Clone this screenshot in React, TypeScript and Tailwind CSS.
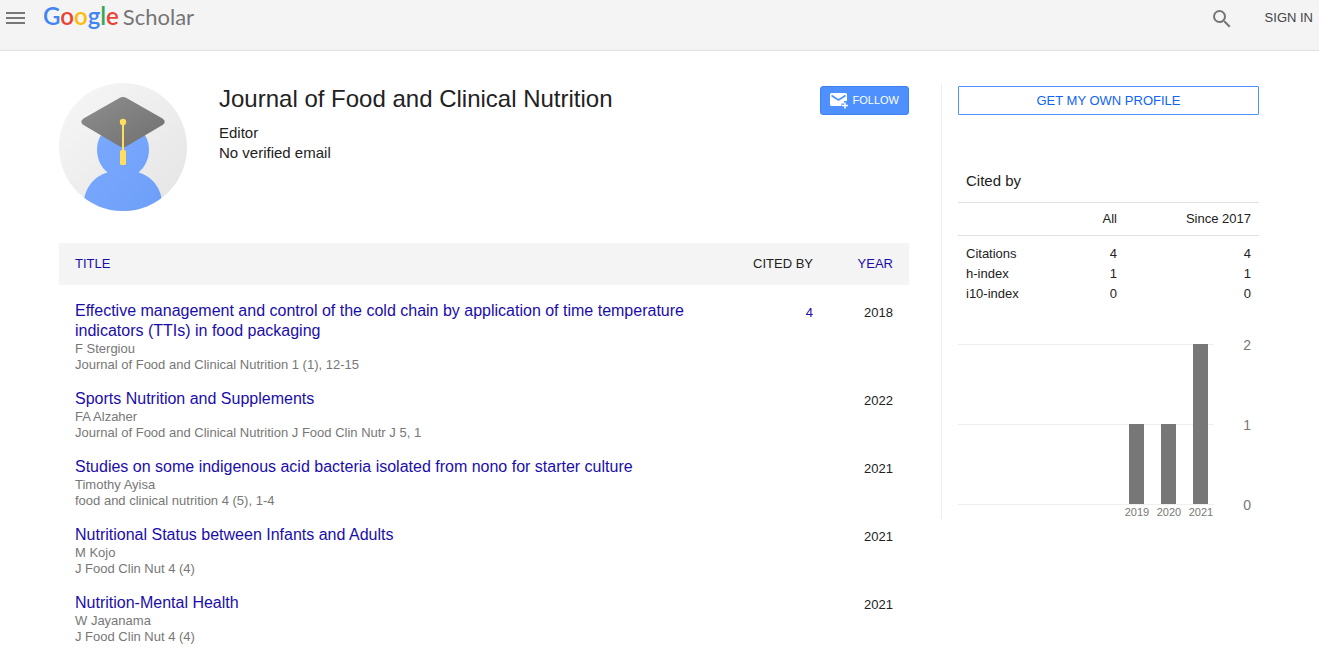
import React from "react";

type Article = {
  title: string;
  authors: string;
  venue: string;
  cited?: number;
  year: number;
};

const articles: Article[] = [
  {
    title:
      "Effective management and control of the cold chain by application of time temperature indicators (TTIs) in food packaging",
    authors: "F Stergiou",
    venue: "Journal of Food and Clinical Nutrition 1 (1), 12-15",
    cited: 4,
    year: 2018,
  },
  {
    title: "Sports Nutrition and Supplements",
    authors: "FA Alzaher",
    venue: "Journal of Food and Clinical Nutrition J Food Clin Nutr J 5, 1",
    year: 2022,
  },
  {
    title: "Studies on some indigenous acid bacteria isolated from nono for starter culture",
    authors: "Timothy Ayisa",
    venue: "food and clinical nutrition 4 (5), 1-4",
    year: 2021,
  },
  {
    title: "Nutritional Status between Infants and Adults",
    authors: "M Kojo",
    venue: "J Food Clin Nut 4 (4)",
    year: 2021,
  },
  {
    title: "Nutrition-Mental Health",
    authors: "W Jayanama",
    venue: "J Food Clin Nut 4 (4)",
    year: 2021,
  },
];

const metrics = [
  { name: "Citations", all: 4, recent: 4 },
  { name: "h-index", all: 1, recent: 1 },
  { name: "i10-index", all: 0, recent: 0 },
];

const citationsPerYear = [
  { year: 2019, count: 1 },
  { year: 2020, count: 1 },
  { year: 2021, count: 2 },
];

const chartMax = 2;

function Header() {
  return (
    <header className="flex h-[51px] items-start border-b border-[#e0e0e0] bg-[#f4f4f4] px-1.5">
      <button type="button" aria-label="Menu" className="mt-3 h-3 w-5">
        <svg viewBox="0 0 20 12" className="h-3 w-5" fill="#777" shapeRendering="crispEdges">
          <path d="M0 0h19v2H0zM0 5h19v2H0zM0 10h19v2H0z" />
        </svg>
      </button>
      <a
        href="#home"
        className="ml-[17px] flex items-baseline gap-1 font-['Lato',sans-serif] text-[24px] leading-8 text-[#757575]"
      >
        <span className="font-semibold">
          <span className="text-[#4285f4]">G</span>
          <span className="text-[#ea4335]">o</span>
          <span className="text-[#fbbc05]">o</span>
          <span className="text-[#4285f4]">g</span>
          <span className="text-[#34a853]">l</span>
          <span className="text-[#ea4335]">e</span>
        </span>
        <span className="text-[22px]">Scholar</span>
      </a>
      <button type="button" aria-label="Search" className="mt-[7px] ml-auto">
        <svg viewBox="0 0 24 24" className="size-6" fill="#757575">
          <path d="M15.5 14h-.79l-.28-.27A6.471 6.471 0 0 0 16 9.5 6.5 6.5 0 1 0 9.5 16c1.61 0 3.09-.59 4.23-1.57l.27.28v.79l5 4.99L20.49 19l-4.99-5zm-6 0C7.01 14 5 11.99 5 9.5S7.01 5 9.5 5 14 7.01 14 9.5 11.99 14 9.5 14z" />
        </svg>
      </button>
      <a href="#signin" className="mt-2 ml-[31px] text-[13px] leading-5 text-[#444]">
        SIGN IN
      </a>
    </header>
  );
}

function Avatar() {
  return (
    <svg viewBox="0 0 128 128" className="size-32 shrink-0" role="img" aria-label="Profile picture">
      <defs>
        <linearGradient id="disc" x1="0" y1="0" x2="1" y2="1">
          <stop offset="0" stopColor="#f7f7f7" />
          <stop offset="1" stopColor="#e4e4e4" />
        </linearGradient>
        <linearGradient id="person" x1="0" y1="0" x2="1" y2="1">
          <stop offset="0" stopColor="#7baaff" />
          <stop offset="1" stopColor="#6e9ff8" />
        </linearGradient>
        <linearGradient id="cap" x1="0" y1="0" x2="1" y2="1">
          <stop offset="0" stopColor="#8f8f8f" />
          <stop offset="1" stopColor="#6f6f6f" />
        </linearGradient>
        <clipPath id="round">
          <circle cx="64" cy="64" r="64" />
        </clipPath>
      </defs>
      <circle cx="64" cy="64" r="64" fill="url(#disc)" />
      <g clipPath="url(#round)">
        <path
          d="M38 66a26 26 0 0 1 52 0c0 10-4 18-10.500 23.500C93 93 103 106 103 120v8H25v-8c0-14 10-27 23.500-30.500C42 84 38 76 38 66z"
          fill="url(#person)"
        />
      </g>
      <path
        d="M60.500 15Q64 13 67.500 15L103.500 35.500Q108 38.800 103.500 42L68 63Q64 65.500 60 63L24.500 42Q20 38.800 24.500 35.500Z"
        fill="url(#cap)"
      />
      <circle cx="64" cy="39" r="3.200" fill="#ffdd5e" />
      <path d="M63 39h2v28h-2z" fill="#ffdd5e" />
      <rect x="61" y="67" width="6" height="15" rx="1.500" fill="#ffdd5e" />
    </svg>
  );
}

function Profile() {
  return (
    <section className="flex items-start pt-8">
      <Avatar />
      <div className="ml-8 flex-1 text-[#222]">
        <h1 className="text-[24px] leading-8">Journal of Food and Clinical Nutrition</h1>
        <p className="mt-2 text-[15px] leading-5">Editor</p>
        <p className="text-[15px] leading-5">No verified email</p>
      </div>
      <button
        type="button"
        className="mt-[3px] flex h-[29px] items-center gap-1 rounded-[3px] border border-[#3f83f3] bg-[#4d90fe] pr-[9px] pl-2 text-[11px] text-white"
      >
        <svg viewBox="0 0 20 18" className="h-[18px] w-5">
          <path
            d="M2.500 1h14A1.500 1.500 0 0 1 18 2.500V9h-3v2.500h-2.500V14h-10A1.500 1.500 0 0 1 1 12.500v-10A1.500 1.500 0 0 1 2.500 1z"
            fill="#fff"
          />
          <path d="M2.500 3.500L9.500 8l7-4.500" fill="none" stroke="#4d90fe" strokeWidth="1.600" />
          <path d="M16 10.500v6M13 13.500h6" stroke="#fff" strokeWidth="1.600" />
        </svg>
        FOLLOW
      </button>
    </section>
  );
}

function ArticleTable() {
  return (
    <table className="mt-8 w-full table-fixed text-left text-[13px] text-[#222]">
      <colgroup>
        <col />
        <col className="w-[100px]" />
        <col className="w-24" />
      </colgroup>
      <thead>
        <tr className="h-[42px] bg-[#f4f4f4]">
          <th className="pl-4 font-normal">
            <a href="#title" className="text-[#1a0dab]">
              TITLE
            </a>
          </th>
          <th className="text-right font-normal">CITED BY</th>
          <th className="pr-4 text-right font-normal">
            <a href="#year" className="text-[#1a0dab]">
              YEAR
            </a>
          </th>
        </tr>
      </thead>
      <tbody className="align-top before:block before:h-2">
        {articles.map((a) => (
          <tr key={a.title}>
            <td className="py-2 pr-6 pl-4 leading-4 text-[#777]">
              <a href="#article" className="block text-[16px] leading-5 text-[#1a0dab]">
                {a.title}
              </a>
              <div>{a.authors}</div>
              <div>{a.venue}</div>
            </td>
            <td className="py-2 text-right leading-6">
              {a.cited !== undefined && (
                <a href="#citations" className="text-[#1a0dab]">
                  {a.cited}
                </a>
              )}
            </td>
            <td className="py-2 pr-4 text-right leading-6">{a.year}</td>
          </tr>
        ))}
      </tbody>
    </table>
  );
}

function CitationChart() {
  return (
    <div className="mt-10 flex pr-2 text-[#777]">
      <div className="flex-1">
        <div className="relative h-[161px]">
          <div className="absolute inset-0 flex flex-col justify-between">
            <div className="h-px bg-[#eee]" />
            <div className="h-px bg-[#eee]" />
            <div className="h-px bg-[#eee]" />
          </div>
          <div className="relative -mr-0.5 flex h-40 items-end justify-end">
            {citationsPerYear.map((c) => (
              <div key={c.year} className="flex h-full w-8 items-end justify-center">
                <div
                  className="w-[15px] bg-[#777]"
                  style={{ height: `${(c.count / chartMax) * 100}%` }}
                />
              </div>
            ))}
          </div>
        </div>
        <div className="-mr-[3px] flex justify-end text-center text-[11px] leading-[14px]">
          {citationsPerYear.map((c) => (
            <span key={c.year} className="w-8">
              {c.year}
            </span>
          ))}
        </div>
      </div>
      <div className="-mt-2 flex h-[178px] w-[37px] flex-col justify-between text-right text-[14px] leading-[18px]">
        <span>2</span>
        <span>1</span>
        <span>0</span>
      </div>
    </div>
  );
}

function Sidebar() {
  return (
    <aside className="mt-[33px] w-[318px] shrink-0 self-start border-l border-[#eee] pl-4 text-[#222]">
      <div className="pt-0.5">
        <button
          type="button"
          className="h-[29px] w-full rounded-[1px] border border-[#4d90fe] text-[13px] text-[#1164f4]"
        >
          GET MY OWN PROFILE
        </button>
      </div>
      <h2 className="mt-14 px-2 text-[15px] leading-5">Cited by</h2>
      <table className="mt-[11px] w-full table-fixed text-right text-[13px]">
        <colgroup>
          <col />
          <col className="w-[67px]" />
          <col className="w-[134px]" />
        </colgroup>
        <thead>
          <tr className="h-[33px] border-y border-[#e0e0e0]">
            <th aria-label="Metric" />
            <th className="px-2 font-normal">All</th>
            <th className="px-2 font-normal">Since 2017</th>
          </tr>
        </thead>
        <tbody className="before:block before:h-2">
          {metrics.map((m) => (
            <tr key={m.name} className="leading-5">
              <td className="px-2 text-left">{m.name}</td>
              <td className="px-2">{m.all}</td>
              <td className="px-2">{m.recent}</td>
            </tr>
          ))}
        </tbody>
      </table>
      <CitationChart />
    </aside>
  );
}

export default function App() {
  return (
    <div className="min-h-screen bg-white font-['Liberation_Sans',Arial,sans-serif]">
      <Header />
      <div className="mx-auto flex max-w-[1201px] gap-8 pr-px">
        <main className="min-w-0 flex-1">
          <Profile />
          <ArticleTable />
        </main>
        <Sidebar />
      </div>
    </div>
  );
}
